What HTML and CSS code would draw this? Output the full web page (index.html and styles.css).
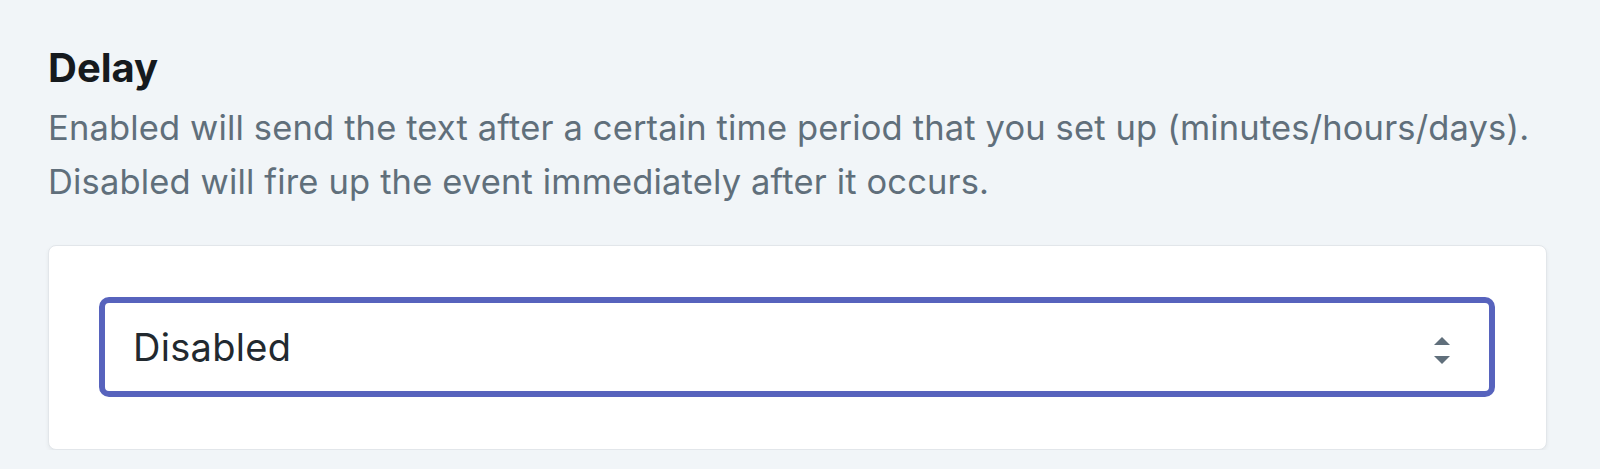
FILE: index.html
```html
<!DOCTYPE html>
<html lang="en">
<head>
  <meta charset="UTF-8" />
  <meta name="viewport" content="width=device-width, initial-scale=1.0"/>
  <title>Delay</title>

  <link rel="stylesheet" href="styles.css">
</head>
<body>

  <div class="section">
    <h2 class="section-title">Delay</h2>
    <p class="section-help">
      Enabled will send the text after a certain time period that you set up (minutes/hours/days).<br>
      Disabled will fire up the event immediately after it occurs.
    </p>

    <!-- Delay select card -->
    <div class="card">
      <div class="select-wrap">
        <select class="select-box" name="delay">
          <option>Disabled</option>
          <option>Enabled</option>
        </select>
        <svg class="select-arrows" width="16" height="27" viewBox="0 0 16 27">
          <path d="M8 0 L16 8 L0 8 Z" fill="#606f7b"/>
          <path d="M0 19 L16 19 L8 27 Z" fill="#606f7b"/>
        </svg>
      </div>
    </div>
  </div>

</body>
</html>
```

FILE: styles.css
```css
body {
  font-family: Inter, "Noto Sans", sans-serif;
  background-color: #f1f5f8;
  margin: 0;
}
.section {
  width: 1499px;
  margin-left: 48px;
  padding-top: 44px;
}
.section-title {
  font-size: 40px;
  line-height: 48px;
  font-weight: 700;
  color: #161a1e;
  margin: 0;
}
.section-help {
  font-size: 34.5px;
  letter-spacing: 0.15px;
  line-height: 54px;
  color: #606f7b;
  margin: 9px 0 36px 0;
}
.card {
  background-color: white;
  border: 1px solid #e2e6ea;
  border-radius: 8px;
  box-shadow: 0 2px 4px rgba(0, 0, 0, 0.06);
  padding: 51px 51px 52px 50px;
}
.select-wrap {
  position: relative;
}
.select-box {
  display: block;
  width: 100%;
  height: 100px;
  box-sizing: border-box;
  appearance: none;
  -webkit-appearance: none;
  background-color: white;
  border: 6px solid #5763bd;
  border-radius: 10px;
  padding: 0 80px 0 28px;
  font-family: Inter, "Noto Sans", sans-serif;
  font-size: 38px;
  letter-spacing: 0.3px;
  color: #22292f;
  outline: none;
}
.select-arrows {
  position: absolute;
  right: 45px;
  top: 40px;
  pointer-events: none;
}
```
